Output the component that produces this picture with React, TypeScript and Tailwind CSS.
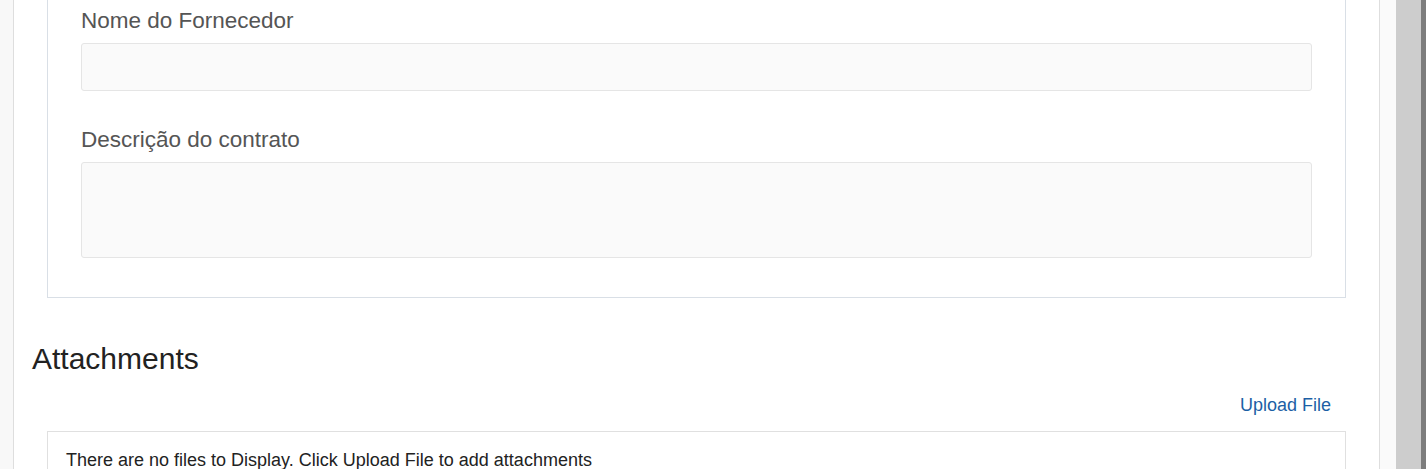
import React from 'react';

const Campo: React.FC<{ rotulo: string; altura: string; topo: string }> = ({ rotulo, altura, topo }) => (
  <div className={topo}>
    <label className="block text-[22.5px] leading-[26px] text-[#555555]">{rotulo}</label>
    <div className={`mt-[9px] w-full ${altura} rounded-[3px] border border-[#e5e5e5] bg-[#fafafa]`} />
  </div>
);

const App: React.FC = () => {
  return (
    <div
      className="flex h-[469px] w-[1426px] overflow-hidden bg-[#f8f8f8]"
      style={{ fontFamily: '"Liberation Sans", Arial, sans-serif' }}
    >
      {/* Área principal */}
      <div className="ml-[13px] flex h-full w-[1367px] flex-col border-x border-[#dedede] bg-white">
        {/* Painel do formulário */}
        <div className="mx-[33px] border-x border-b border-[#d9dfe6] px-[33px] pb-[39px]">
          <Campo rotulo="Nome do Fornecedor" altura="h-[48px]" topo="pt-[8px]" />
          <Campo rotulo="Descrição do contrato" altura="h-[96px]" topo="mt-[36px]" />
        </div>

        {/* Anexos */}
        <h2 className="ml-[18px] mt-[44px] text-[30px] leading-[34px] text-[#222222]">Attachments</h2>
        <div className="mr-[48px] mt-[19px] flex justify-end">
          <a className="cursor-pointer text-[18px] leading-[20px] text-[#1c5fa5]">Upload File</a>
        </div>
        <div className="mx-[33px] mt-[16px] border border-[#e0e0e0] px-[18px] pt-[18px]">
          <p className="text-[18px] leading-[20px] text-[#222222]">
            There are no files to Display. Click Upload File to add attachments
          </p>
        </div>
      </div>

      {/* Barra de rolagem */}
      <div className="h-full w-[16px] bg-[#fafafa]" />
      <div className="h-full w-[25px] bg-[#cdcdcd]" />
      <div className="h-full w-[5px] bg-[#7d7d7d]" />
    </div>
  );
};

export default App;
